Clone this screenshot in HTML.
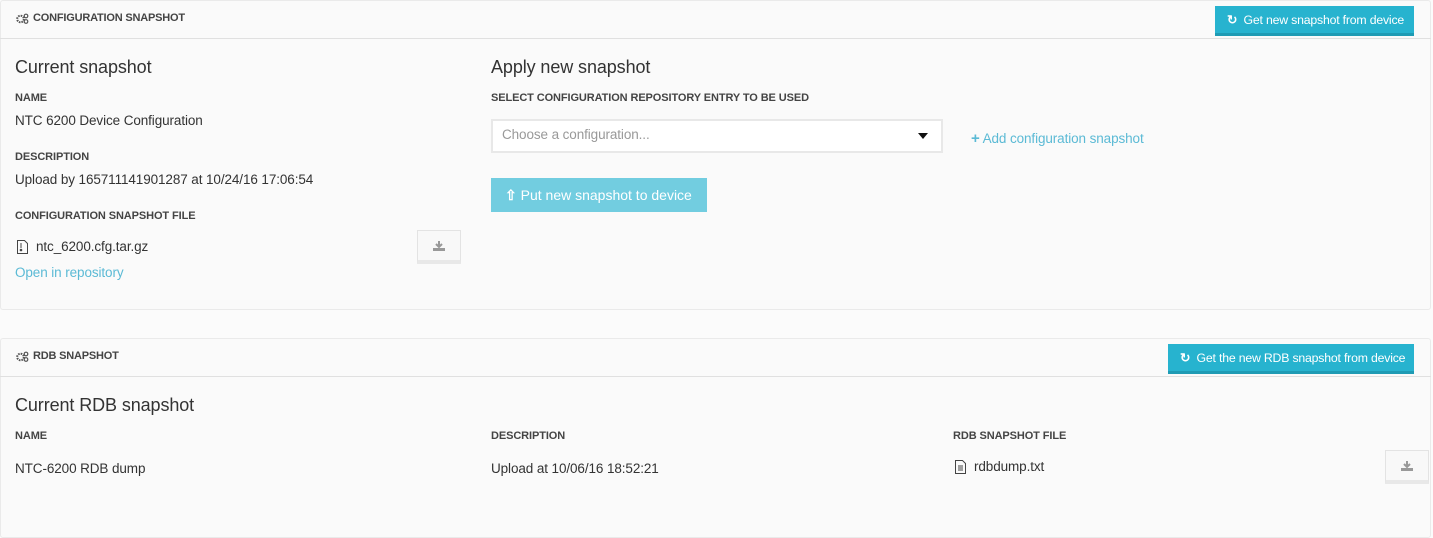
<!DOCTYPE html>
<html><head><style>
*{margin:0;padding:0;box-sizing:border-box}
body{width:1433px;height:515px;background:#fbfbfb;font-family:"Liberation Sans",sans-serif;color:#333;position:relative;overflow:hidden}
.a{position:absolute;white-space:nowrap}
.panel{position:absolute;left:0;width:1431px;border:1px solid #eaeaea;border-radius:3px;background:#fafafa}
.hline{position:absolute;left:0;width:1431px;height:1px;background:#e0e0e0}
.ht{font-size:11px;font-weight:bold;color:#444;letter-spacing:-0.2px}
.h2{font-size:18px;color:#333;letter-spacing:-0.1px}
.lbl{font-size:11px;font-weight:bold;color:#444;letter-spacing:-0.1px}
.txt{font-size:13.5px;color:#333;letter-spacing:-0.1px}
.btn{position:absolute;background:#27b3cf;color:#fff;font-size:12.3px;height:30px;line-height:28px;border-bottom:3px solid #1f9bb4;padding-left:12px;letter-spacing:-0.2px}
.dl{position:absolute;width:44px;height:34px;border:1px solid #e3e3e3;background:#f8f8f8;border-bottom:4px solid #e8e8e8}
</style></head><body>
<div class="panel" style="top:0;height:310px"></div>
<div class="hline" style="top:38px"></div>
<svg class="a" style="left:16px;top:13px" width="13" height="11" viewBox="0 0 13 11"><circle cx="4.5" cy="6" r="3.3" fill="none" stroke="#555" stroke-width="2" stroke-dasharray="1.6 1"/><circle cx="10" cy="3" r="1.8" fill="none" stroke="#555" stroke-width="1.2"/><circle cx="10" cy="8.5" r="1.8" fill="none" stroke="#555" stroke-width="1.2"/></svg>
<div class="a ht" style="left:33px;top:12px">CONFIGURATION SNAPSHOT</div>
<div class="btn" style="left:1215px;top:6px;width:199px"><b>&#x21bb;</b>&nbsp; Get new snapshot from device</div>

<div class="a h2" style="left:15px;top:57px">Current snapshot</div>
<div class="a lbl" style="left:15px;top:92px">NAME</div>
<div class="a txt" style="left:15px;top:113px">NTC 6200 Device Configuration</div>
<div class="a lbl" style="left:15px;top:151px">DESCRIPTION</div>
<div class="a txt" style="left:15px;top:172px">Upload by 165711141901287 at 10/24/16 17:06:54</div>
<div class="a lbl" style="left:15px;top:210px">CONFIGURATION SNAPSHOT FILE</div>
<svg class="a" style="left:17px;top:240px" width="11" height="14" viewBox="0 0 11 14"><path d="M0.5 0.5h7l3 3v10h-10z" fill="none" stroke="#444"/><path d="M4 3v5" stroke="#444"/><circle cx="4" cy="10" r="1.3" fill="#444"/></svg>
<div class="a txt" style="left:36px;top:239px">ntc_6200.cfg.tar.gz</div>
<div class="a txt" style="left:15px;top:265px;color:#5bbad5">Open in repository</div>
<div class="dl" style="left:417px;top:230px"><svg style="position:absolute;left:15px;top:10px" width="12" height="10" viewBox="0 0 12 10"><path d="M6 0v5M3 3l3 3 3-3" stroke="#999" stroke-width="2" fill="none"/><rect x="0" y="7" width="12" height="3" fill="#999"/></svg></div>

<div class="a h2" style="left:491px;top:57px">Apply new snapshot</div>
<div class="a lbl" style="left:491px;top:92px">SELECT CONFIGURATION REPOSITORY ENTRY TO BE USED</div>
<div class="a" style="left:491px;top:119px;width:452px;height:34px;background:#fff;border:2px solid #e8e8e8"></div>
<div class="a txt" style="left:502px;top:127px;color:#999">Choose a configuration...</div>
<div class="a" style="left:918px;top:133px;width:0;height:0;border-left:5px solid transparent;border-right:5px solid transparent;border-top:6px solid #111"></div>
<div class="a txt" style="left:971px;top:130px;color:#5bbad5"><b style="font-size:15px">+</b> Add configuration snapshot</div>
<div class="a" style="left:491px;top:178px;width:216px;height:34px;background:#72cde0;color:#fff;font-size:14px;line-height:34px;padding-left:14px"><b>&#x21e7;</b> Put new snapshot to device</div>

<div class="panel" style="top:338px;height:200px"></div>
<div class="hline" style="top:376px"></div>
<svg class="a" style="left:16px;top:351px" width="13" height="11" viewBox="0 0 13 11"><circle cx="4.5" cy="6" r="3.3" fill="none" stroke="#555" stroke-width="2" stroke-dasharray="1.6 1"/><circle cx="10" cy="3" r="1.8" fill="none" stroke="#555" stroke-width="1.2"/><circle cx="10" cy="8.5" r="1.8" fill="none" stroke="#555" stroke-width="1.2"/></svg>
<div class="a ht" style="left:33px;top:350px">RDB SNAPSHOT</div>
<div class="btn" style="left:1168px;top:344px;width:246px"><b>&#x21bb;</b>&nbsp; Get the new RDB snapshot from device</div>

<div class="a h2" style="left:15px;top:395px">Current RDB snapshot</div>
<div class="a lbl" style="left:15px;top:430px">NAME</div>
<div class="a txt" style="left:15px;top:461px">NTC-6200 RDB dump</div>
<div class="a lbl" style="left:491px;top:430px">DESCRIPTION</div>
<div class="a txt" style="left:491px;top:461px">Upload at 10/06/16 18:52:21</div>
<div class="a lbl" style="left:953px;top:430px">RDB SNAPSHOT FILE</div>
<svg class="a" style="left:955px;top:460px" width="11" height="14" viewBox="0 0 11 14"><path d="M0.5 0.5h7l3 3v10h-10z" fill="none" stroke="#444"/><path d="M3 6h5M3 8h5M3 10h5" stroke="#444"/></svg>
<div class="a txt" style="left:974px;top:459px">rdbdump.txt</div>
<div class="dl" style="left:1385px;top:450px"><svg style="position:absolute;left:15px;top:10px" width="12" height="10" viewBox="0 0 12 10"><path d="M6 0v5M3 3l3 3 3-3" stroke="#999" stroke-width="2" fill="none"/><rect x="0" y="7" width="12" height="3" fill="#999"/></svg></div>
</body></html>
